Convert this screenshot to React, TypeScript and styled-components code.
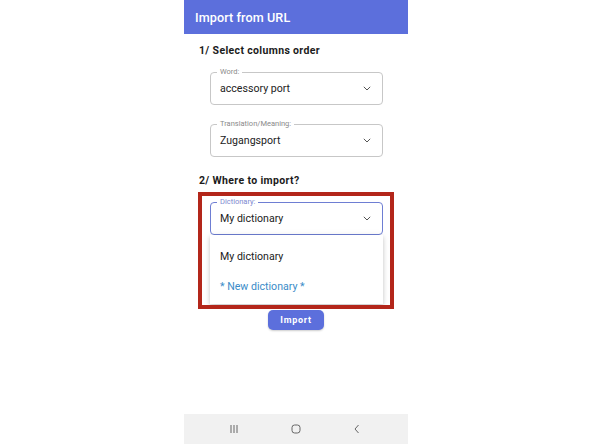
import React from "react";
import styled, { createGlobalStyle } from "styled-components";

const Global = createGlobalStyle`
  html, body { margin: 0; padding: 0; background: #ffffff; }
  body { font-family: Roboto, "Noto Sans", "Liberation Sans", sans-serif; }
  * { box-sizing: border-box; }
`;

const Page = styled.div`
  display: flex;
  justify-content: center;
  width: 592px;
  height: 444px;
  background: #ffffff;
`;

const Phone = styled.div`
  width: 224px;
  height: 444px;
  display: flex;
  flex-direction: column;
  background: #ffffff;
`;

const Header = styled.header`
  height: 34px;
  flex-shrink: 0;
  display: flex;
  align-items: center;
  padding-left: 11px;
  background: #5c6fdc;
`;

const Title = styled.h1`
  margin: 0;
  font-size: 12.6px;
  font-weight: 500;
  color: #ffffff;
  letter-spacing: 0.1px;
`;

const Content = styled.main`
  flex: 1;
  display: flex;
  flex-direction: column;
  padding: 10px 14px 0 14px;
`;

const SectionTitle = styled.h2<{ $gap: number }>`
  margin: 0 0 ${(p) => p.$gap}px 1px;
  font-size: 10.5px;
  line-height: 14px;
  font-weight: 700;
  color: #1b1b1b;
  letter-spacing: 0.35px;
`;

const Fields = styled.div`
  display: flex;
  flex-direction: column;
  gap: 15px;
  margin: 0 11px 17px 12px;
`;

const Field = styled.fieldset<{ $focused?: boolean }>`
  margin: 0;
  min-width: 0;
  padding: 0;
  border: ${(p) => (p.$focused ? "1.5px solid #6e7ed3" : "1px solid #c7c7c7")};
  border-radius: 4px;
`;

const Legend = styled.legend<{ $focused?: boolean }>`
  margin-left: 6px;
  padding: 0 3px;
  font-size: 7.5px;
  line-height: 8px;
  color: ${(p) => (p.$focused ? "#7d89cf" : "#8a8a8a")};
`;

const FieldBody = styled.div`
  height: 28px;
  display: flex;
  align-items: center;
  justify-content: space-between;
  padding: 0 11px 4px 9px;
`;

const Value = styled.span`
  font-size: 10.6px;
  color: #222222;
`;

const Chevron = styled.svg`
  width: 8px;
  height: 5px;
  flex-shrink: 0;
`;

const Highlight = styled.div`
  display: flex;
  flex-direction: column;
  border: 4px solid #b3261a;
  padding: 2px 7px 0 8px;
  height: 117px;
  overflow: hidden;
`;

const Menu = styled.ul`
  list-style: none;
  margin: 0;
  padding: 6px 0 3px;
  background: #ffffff;
  box-shadow: 0 2px 4px rgba(0, 0, 0, 0.18), 0 1px 8px rgba(0, 0, 0, 0.08);
`;

const MenuItem = styled.li<{ $accent?: boolean }>`
  height: 30px;
  display: flex;
  align-items: center;
  padding-left: 10px;
  font-size: 10.6px;
  color: ${(p) => (p.$accent ? "#3a8cc8" : "#222222")};
`;

const ImportButton = styled.button`
  align-self: center;
  margin-top: 1px;
  width: 56px;
  height: 20px;
  border: none;
  border-radius: 5px;
  background: #5c6fdc;
  color: #ffffff;
  font-family: inherit;
  font-size: 9px;
  font-weight: 700;
  letter-spacing: 0.7px;
  box-shadow: 0 1px 2px rgba(0, 0, 0, 0.2);
  padding: 0;
`;

const NavBar = styled.nav`
  height: 30px;
  flex-shrink: 0;
  display: flex;
  align-items: center;
  justify-content: space-between;
  padding: 0 46px 0 45px;
  background: #f1f1f1;
`;

const NavIcon = styled.svg`
  width: 10px;
  height: 10px;
`;

const ChevronDown = () => (
  <Chevron viewBox="0 0 8 5">
    <path d="M0.8 0.8 L4 4 L7.2 0.8" fill="none" stroke="#555" strokeWidth="1" />
  </Chevron>
);

const Select: React.FC<{ label: string; value: string; focused?: boolean }> = ({
  label,
  value,
  focused,
}) => (
  <Field $focused={focused}>
    <Legend $focused={focused}>{label}</Legend>
    <FieldBody>
      <Value>{value}</Value>
      <ChevronDown />
    </FieldBody>
  </Field>
);

export default function App() {
  return (
    <>
      <Global />
      <Page>
        <Phone>
          <Header>
            <Title>Import from URL</Title>
          </Header>
          <Content>
            <SectionTitle $gap={10}>1/ Select columns order</SectionTitle>
            <Fields>
              <Select label="Word:" value="accessory port" />
              <Select label="Translation/Meaning:" value="Zugangsport" />
            </Fields>
            <SectionTitle $gap={4}>2/ Where to import?</SectionTitle>
            <Highlight>
              <Select label="Dictionary:" value="My dictionary" focused />
              <Menu>
                <MenuItem>My dictionary</MenuItem>
                <MenuItem $accent>* New dictionary *</MenuItem>
              </Menu>
            </Highlight>
            <ImportButton>Import</ImportButton>
          </Content>
          <NavBar>
            <NavIcon viewBox="0 0 10 10">
              <path d="M2 1v8M5 1v8M8 1v8" stroke="#666" strokeWidth="1" fill="none" />
            </NavIcon>
            <NavIcon viewBox="0 0 10 10">
              <rect x="1" y="1" width="8" height="8" rx="2.6" stroke="#666" strokeWidth="1" fill="none" />
            </NavIcon>
            <NavIcon viewBox="0 0 10 10">
              <path d="M6.5 1 L3 5 L6.5 9" stroke="#666" strokeWidth="1" fill="none" />
            </NavIcon>
          </NavBar>
        </Phone>
      </Page>
    </>
  );
}
